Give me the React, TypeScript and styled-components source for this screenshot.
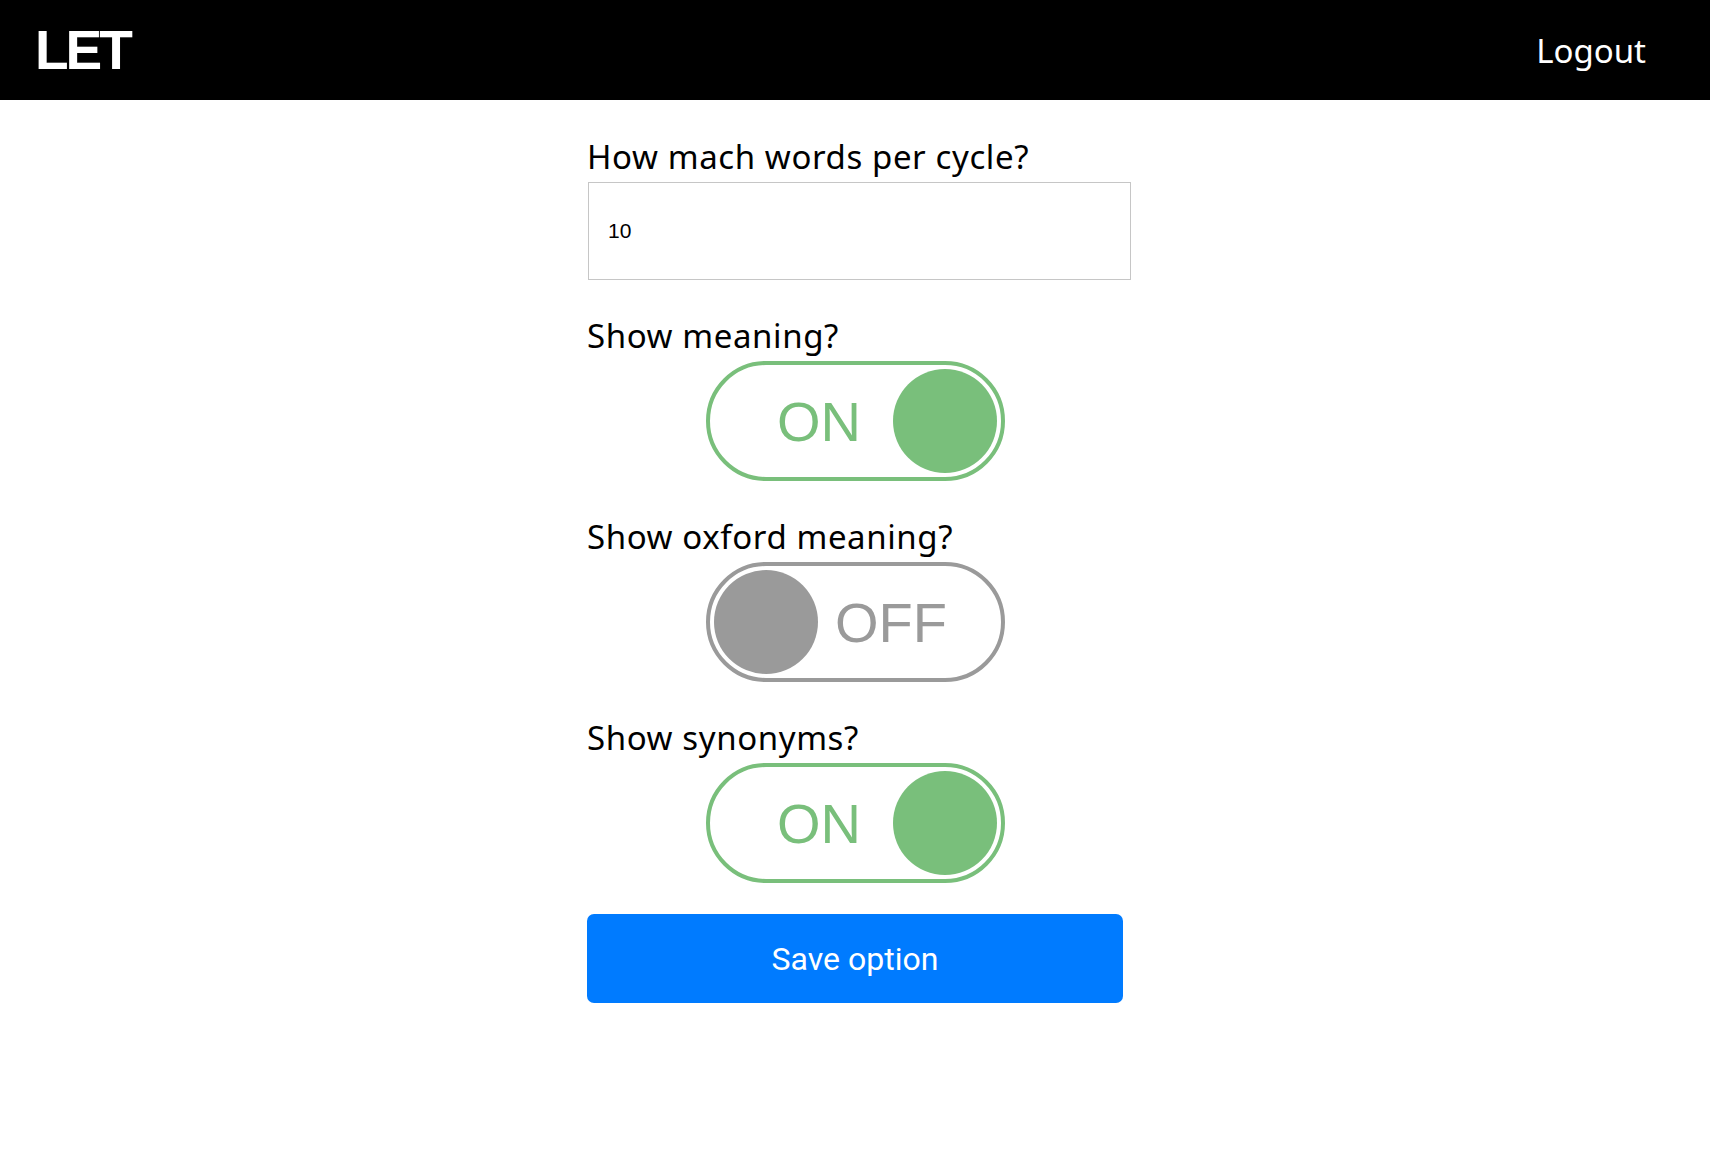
import { useState } from 'react';
import styled, { createGlobalStyle } from 'styled-components';

const GlobalStyle = createGlobalStyle`
  * {
    box-sizing: border-box;
  }

  body {
    margin: 0;
    background: #ffffff;
    font-family: 'Noto Sans', 'Liberation Sans', sans-serif;
  }
`;

const Header = styled.header`
  display: flex;
  justify-content: space-between;
  align-items: center;
  height: 100px;
  padding: 0 64px 0 35px;
  background: #000000;
  color: #ffffff;
`;

const Brand = styled.div`
  font-family: 'Liberation Sans', Arial, sans-serif;
  font-size: 55px;
  font-weight: 700;
  letter-spacing: -3px;
`;

const LogoutLink = styled.a`
  font-family: 'Noto Sans', sans-serif;
  font-size: 33px;
  color: #ffffff;
  cursor: pointer;
`;

const Form = styled.form`
  display: flex;
  flex-direction: column;
  width: 536px;
  margin: 0 auto;
  padding-top: 37px;
`;

const Group = styled.div`
  display: flex;
  flex-direction: column;
  margin-bottom: 36px;

  &:last-of-type {
    margin-bottom: 31px;
  }
`;

const Label = styled.label`
  font-family: 'Noto Sans', sans-serif;
  font-size: 33px;
  line-height: 40px;
  letter-spacing: 0.6px;
  color: #000000;
  margin-bottom: 5px;
`;

const NumberInput = styled.input`
  width: 543px;
  height: 98px;
  margin-left: 1px;
  padding: 0 19px;
  border: 1px solid #c6c6c6;
  font-family: 'Liberation Sans', Arial, sans-serif;
  font-size: 21px;
  color: #000000;
  outline: none;
`;

const Toggle = styled.button<{ $on: boolean }>`
  display: flex;
  flex-direction: ${p => (p.$on ? 'row' : 'row-reverse')};
  align-items: center;
  align-self: center;
  width: 299px;
  height: 120px;
  padding: 0;
  border: 4px solid ${p => (p.$on ? '#79bf7b' : '#9a9a9a')};
  border-radius: 60px;
  background: #ffffff;
  cursor: pointer;
`;

const ToggleText = styled.span<{ $on: boolean }>`
  flex: 1;
  text-align: center;
  padding: ${p => (p.$on ? '0 0 0 40px' : '0 40px 0 0')};
  font-family: 'Liberation Sans', Arial, sans-serif;
  font-size: 56px;
  color: ${p => (p.$on ? '#79bf7b' : '#9a9a9a')};
`;

const Knob = styled.span<{ $on: boolean }>`
  width: 104px;
  height: 104px;
  margin: 0 4px;
  border-radius: 50%;
  background: ${p => (p.$on ? '#79bf7b' : '#9a9a9a')};
`;

const SaveButton = styled.button`
  width: 536px;
  height: 89px;
  border: none;
  border-radius: 7px;
  background: #007bff;
  color: #ffffff;
  font-family: Roboto, 'Liberation Sans', sans-serif;
  font-size: 32px;
  cursor: pointer;
`;

type SwitchProps = { on: boolean; onChange: () => void };

const Switch = ({ on, onChange }: SwitchProps) => (
  <Toggle type="button" $on={on} onClick={onChange}>
    <ToggleText $on={on}>{on ? 'ON' : 'OFF'}</ToggleText>
    <Knob $on={on} />
  </Toggle>
);

const App = () => {
  const [words, setWords] = useState('10');
  const [meaning, setMeaning] = useState(true);
  const [oxford, setOxford] = useState(false);
  const [synonyms, setSynonyms] = useState(true);

  return (
    <>
      <GlobalStyle />
      <Header>
        <Brand>LET</Brand>
        <LogoutLink>Logout</LogoutLink>
      </Header>
      <Form onSubmit={e => e.preventDefault()}>
        <Group>
          <Label>How mach words per cycle?</Label>
          <NumberInput value={words} onChange={e => setWords(e.target.value)} />
        </Group>
        <Group>
          <Label>Show meaning?</Label>
          <Switch on={meaning} onChange={() => setMeaning(!meaning)} />
        </Group>
        <Group>
          <Label>Show oxford meaning?</Label>
          <Switch on={oxford} onChange={() => setOxford(!oxford)} />
        </Group>
        <Group>
          <Label>Show synonyms?</Label>
          <Switch on={synonyms} onChange={() => setSynonyms(!synonyms)} />
        </Group>
        <SaveButton type="submit">Save option</SaveButton>
      </Form>
    </>
  );
};

export default App;
